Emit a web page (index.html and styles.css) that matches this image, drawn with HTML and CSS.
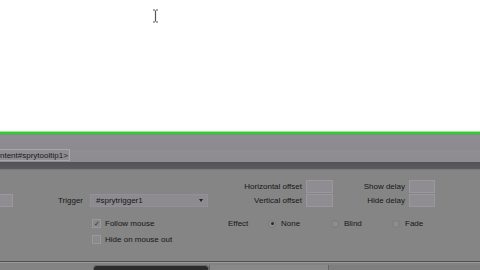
FILE: index.html
```html
<!DOCTYPE html>
<html>
<head>
<meta charset="utf-8">
<link rel="stylesheet" href="styles.css">
</head>
<body>
<div class="app">
  <div class="canvas">
    <svg class="ibeam" width="7" height="14" viewBox="0 0 7 14">
      <path d="M1 1h2M4 1h2M3.5 1.5v11M1 13h2M4 13h2" stroke="#555" stroke-width="1.2" fill="none"/>
    </svg>
  </div>
  <div class="green"></div>
  <div class="status">
    <div class="crumbs"><span class="tag">ntent#sprytooltip1&gt;</span></div>
  </div>
  <div class="band"></div>
  <div class="panel">
    <div class="top">
      <span></span><span></span><span></span>
      <label class="lbl r">Horizontal offset</label><span class="field"></span>
      <label class="lbl r">Show delay</label><span class="field"></span><span></span>
      <span class="field stub"></span>
      <label class="lbl r trig">Trigger</label>
      <div class="select"><span>#sprytrigger1</span><span class="arrow"></span></div>
      <label class="lbl r">Vertical offset</label><span class="field"></span>
      <label class="lbl r">Hide delay</label><span class="field"></span><span></span>
    </div>
    <div class="bottom">
      <span></span>
      <div class="check"><span class="box on">&#10003;</span><span class="lbl">Follow mouse</span></div>
      <span class="lbl effect">Effect</span>
      <div class="check"><span class="radio on"></span><span class="lbl">None</span></div>
      <div class="check"><span class="radio"></span><span class="lbl">Blind</span></div>
      <div class="check"><span class="radio"></span><span class="lbl">Fade</span></div>
      <span></span>
      <div class="check"><span class="box"></span><span class="lbl">Hide on mouse out</span></div>
    </div>
  </div>
  <div class="tabs">
    <span class="tab t1"></span><span class="tab t2"></span><span class="tab t3"></span><span class="tab t4"></span>
  </div>
</div>
</body>
</html>
```
FILE: styles.css
```css
html, body { margin: 0; padding: 0; }
body { width: 480px; height: 270px; overflow: hidden; background: #fff; font-family: "Liberation Sans", Arial, sans-serif; }
.app { width: 480px; height: 270px; display: flex; flex-direction: column; }
.canvas { height: 131px; background: #fff; padding: 9px 0 0 152px; box-sizing: border-box; }
.ibeam { display: block; }
.green { height: 4px; background: #38c838; border-top: 1px solid #9de89d; border-bottom: 1px solid #6a9a6a; box-sizing: border-box; }
.status { height: 28px; background: linear-gradient(#8f8c93, #8c8a8f 55%, #908e93 56%, #8e8c90); display: flex; flex-direction: column; justify-content: flex-end; }
.crumbs { height: 13px; display: flex; }
.tag { width: 70px; height: 12px; box-sizing: border-box; border: 1px solid #a8a6ab; border-left: none; background: #8f8d92; font-size: 8px; line-height: 11px; color: #1a1a1c; white-space: nowrap; overflow: hidden; }
.band { height: 7px; background: linear-gradient(#535256, #5b5a5e); }
.panel { height: 92px; background: #858585; padding-top: 10px; box-sizing: border-box; border-top: 1px solid #7a7a7a; }
.top { display: grid; grid-template-columns: 13px 77px 118px 98px 27px 76px 26px 1fr; grid-template-rows: 13px 13px; row-gap: 1px; }
.lbl { font-size: 8px; color: #161616; line-height: 13px; white-space: nowrap; }
.lbl.r { text-align: right; padding-right: 4px; }
.lbl.trig { padding-right: 7px; }
.field { background: #8f8d91; border: 1px solid #9a989c; box-sizing: border-box; }
.field.stub { border-left: none; }
.select { background: #8d8b8f; border: 1px solid #929094; box-sizing: border-box; display: flex; align-items: center; justify-content: space-between; padding: 0 4px 0 5px; font-size: 8px; color: #161616; }
.arrow { width: 0; height: 0; border-left: 2px solid transparent; border-right: 2px solid transparent; border-top: 3px solid #222; }
.bottom { margin-top: 11px; display: grid; grid-template-columns: 92px 136px 40px 63px 61px 1fr; grid-template-rows: 11px 11px; row-gap: 5px; }
.check { display: flex; align-items: center; gap: 4px; }
.check .lbl { line-height: 11px; }
.effect { line-height: 11px; }
.box { width: 9px; height: 9px; box-sizing: border-box; border: 1px solid #9a989c; background: #8b898d; font-size: 7px; line-height: 7px; text-align: center; color: #333; }
.radio { width: 8px; height: 8px; border-radius: 50%; box-sizing: border-box; background: #8e8c90; border: 1px solid #7c7b7f; position: relative; margin-right: 1px; }
.radio.on::after { content: ""; position: absolute; left: 1.5px; top: 1.5px; width: 3px; height: 3px; border-radius: 50%; background: #2a2a2a; }
.tabs { height: 8px; background: #828282; border-top: 1px solid #505050; box-shadow: inset 0 1px 0 #9a9a9a; display: flex; align-items: flex-end; }
.tab { height: 5px; display: block; }
.t1 { width: 93px; background: #838383; }
.t2 { width: 114px; background: #2c2c2c; border-radius: 4px 4px 0 0; border: 1px solid #6a6a6a; border-bottom: none; height: 4px; }
.t3 { width: 118px; background: #888; border-left: 1px solid #666; }
.t4 { flex: 1; background: #7e7e7e; border-left: 1px solid #666; }
```
